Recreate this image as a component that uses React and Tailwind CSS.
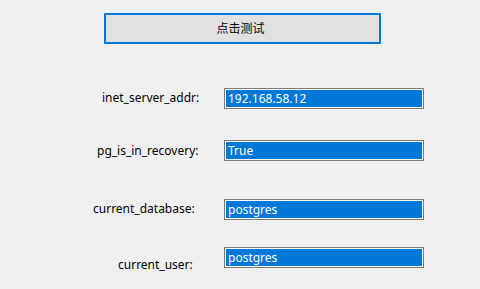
export default function App() {
  const rows = [
    { label: "inet_server_addr:", value: "192.168.58.12", pl: "pl-[102px]", mt: "mt-[44px]", lm: "mt-[2px]" },
    { label: "pg_is_in_recovery:", value: "True", pl: "pl-[97px]", mt: "mt-[31px]", lm: "mt-[3px]" },
    { label: "current_database:", value: "postgres", pl: "pl-[93px]", mt: "mt-[38px]", lm: "mt-[2px]" },
    { label: "current_user:", value: "postgres", pl: "pl-[118px]", mt: "mt-[27px]", lm: "mt-[10px]" },
  ];

  return (
    <div
      className="w-[480px] h-[289px] overflow-hidden bg-[#f0f0f0] text-[12px] text-black"
      style={{ fontFamily: '"Noto Sans", "Noto Sans CJK SC", sans-serif' }}
    >
      <div className="pt-[13px] pl-[104px]">
        <button className="w-[277px] h-[31px] border-2 border-[#0078d7] bg-[#e1e1e1] flex items-center justify-center pr-[4px] leading-none">
          点击测试
        </button>
      </div>

      {rows.map((r) => (
        <div key={r.label} className={`flex items-start ${r.mt}`}>
          <div className={`w-[224px] shrink-0 ${r.pl}`}>
            <span className={`block leading-[16px] ${r.lm}`}>{r.label}</span>
          </div>
          <div className="w-[200px] h-[21px] border border-[#7a7a7a] bg-white p-px">
            <div className="h-full bg-[#0078d7] text-white pl-[2px] flex items-center leading-none">
              {r.value}
            </div>
          </div>
        </div>
      ))}
    </div>
  );
}
